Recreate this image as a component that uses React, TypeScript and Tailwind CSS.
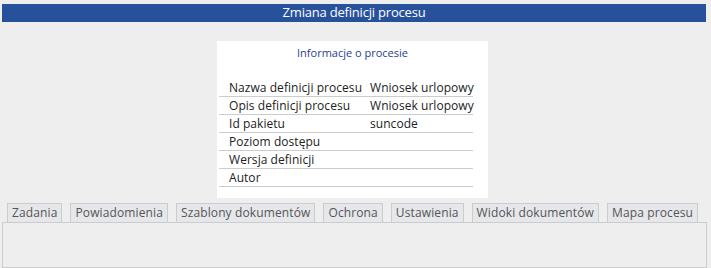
const rows: [string, string][] = [
  ["Nazwa definicji procesu", "Wniosek urlopowy"],
  ["Opis definicji procesu", "Wniosek urlopowy"],
  ["Id pakietu", "suncode"],
  ["Poziom dostępu", ""],
  ["Wersja definicji", ""],
  ["Autor", ""],
];

const tabs = [
  "Zadania",
  "Powiadomienia",
  "Szablony dokumentów",
  "Ochrona",
  "Ustawienia",
  "Widoki dokumentów",
  "Mapa procesu",
];

export default function App() {
  return (
    <div
      className="flex h-[268px] w-[711px] flex-col overflow-hidden bg-[#eeeeee] pt-[4px] text-[12px] text-[#333]"
      style={{ fontFamily: '"Open Sans", "Liberation Sans", sans-serif' }}
    >
      <div className="mx-[2px] flex h-[18px] w-[704px] items-center justify-center bg-[#27529b] text-[13px] tracking-[-0.2px] text-white">
        Zmiana definicji procesu
      </div>

      <div className="mt-[19px] flex justify-center">
        <div className="ml-[-6px] flex h-[157px] w-[271px] flex-col bg-white pl-[2px] pt-[4px]">
          <div className="pr-[2px] text-center text-[11px] leading-[16px] text-[#1f3f8f]">Informacje o procesie</div>
          <div className="mt-[18px] w-[254px]">
            {rows.map(([label, value]) => (
              <div key={label} className="flex h-[18px] items-center whitespace-nowrap border-b border-[#cccccc] tracking-[0.05px] text-[#222]">
                <span className="w-[151px] shrink-0 pl-[10px]">{label}</span>
                <span>{value}</span>
              </div>
            ))}
          </div>
        </div>
      </div>

      <div className="mt-[5px] flex gap-[8px] pl-[7px]">
        {tabs.map((t) => (
          <div
            key={t}
            className="flex h-[19px] items-center whitespace-nowrap border border-b-0 border-[#cccccc] bg-[#e6e7eb] px-[4px] tracking-[0.12px] text-[#555]"
          >
            {t}
          </div>
        ))}
      </div>
      <div className="mx-[2px] h-[60px] w-[705px] border border-[#cccccc] bg-[#eeeeee]" />
    </div>
  );
}
